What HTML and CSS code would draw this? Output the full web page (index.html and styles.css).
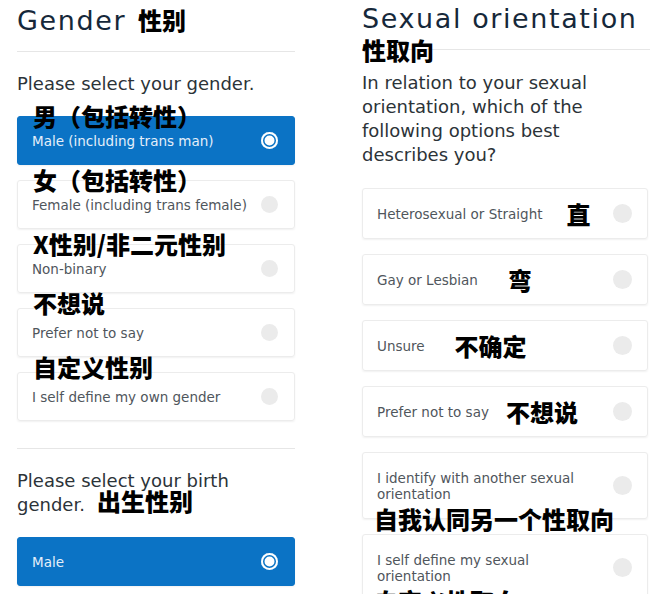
FILE: index.html
```html
<!DOCTYPE html>
<html lang="en">
<head>
  <meta charset="UTF-8">
  <meta name="viewport" content="width=device-width, initial-scale=1.0">
  <title>Gender and sexual orientation</title>
  <link rel="stylesheet" href="styles.css">
</head>
<body>
  <div class="page">

    <!-- left: gender -->
    <section class="panel panel-gender">
      <div class="panel-head">
        <h1>Gender<span class="note-inline">性别</span></h1>
      </div>
      <p class="question">Please select your gender.</p>
      <div class="options">
        <label class="option selected">
          <span class="note">男（包括转性）</span>
          <span class="option-text">Male (including trans man)</span>
          <span class="radio"></span>
        </label>
        <label class="option">
          <span class="note">女（包括转性）</span>
          <span class="option-text">Female (including trans female)</span>
          <span class="radio"></span>
        </label>
        <label class="option">
          <span class="note">X性别/非二元性别</span>
          <span class="option-text">Non-binary</span>
          <span class="radio"></span>
        </label>
        <label class="option">
          <span class="note raised">不想说</span>
          <span class="option-text">Prefer not to say</span>
          <span class="radio"></span>
        </label>
        <label class="option">
          <span class="note raised">自定义性别</span>
          <span class="option-text">I self define my own gender</span>
          <span class="radio"></span>
        </label>
      </div>

      <div class="divider"></div>

      <p class="question">Please select your birth<br>gender.<span class="note-inline">出生性别</span></p>
      <div class="options">
        <label class="option selected">
          <span class="option-text">Male</span>
          <span class="radio"></span>
        </label>
      </div>
    </section>

    <!-- right: sexual orientation -->
    <section class="panel panel-orientation">
      <div class="panel-head">
        <h1>Sexual orientation</h1>
        <span class="note note-head">性取向</span>
      </div>
      <p class="question">In relation to your sexual orientation, which of the following options best describes you?</p>
      <div class="options">
        <label class="option">
          <span class="option-text">Heterosexual or Straight<span class="note-inline">直</span></span>
          <span class="radio"></span>
        </label>
        <label class="option">
          <span class="option-text">Gay or Lesbian<span class="note-inline wide">弯</span></span>
          <span class="radio"></span>
        </label>
        <label class="option">
          <span class="option-text">Unsure<span class="note-inline wide">不确定</span></span>
          <span class="radio"></span>
        </label>
        <label class="option">
          <span class="option-text">Prefer not to say<span class="note-inline tight">不想说</span></span>
          <span class="radio"></span>
        </label>
        <label class="option">
          <span class="option-text">I identify with another sexual orientation</span>
          <span class="radio"></span>
          <span class="note note-bottom">自我认同另一个性取向</span>
        </label>
        <label class="option">
          <span class="option-text">I self define my sexual orientation</span>
          <span class="radio"></span>
          <span class="note note-bottom">自定义性取向</span>
        </label>
      </div>
    </section>

  </div>
</body>
</html>
```

FILE: styles.css
```css
html, body {
  overflow: hidden;
}

body {
  margin: 0;
  background-color: #ffffff;
  font-family: "DejaVu Sans", "Noto Sans", sans-serif;
  color: #2f353b;
}

.page {
  display: grid;
  grid-template-columns: 278px 288px;
  column-gap: 67px;
  padding-left: 17px;
}

.panel-gender {
  padding-top: 5px;
}

.panel-orientation {
  padding-top: 3px;
}

.panel-head {
  position: relative;
  padding-bottom: 14px;
  border-bottom: 1px solid #e6e6e6;
  margin-bottom: 20px;
}

.panel-orientation .panel-head {
  padding-bottom: 14px;
  margin-bottom: 21px;
}

h1 {
  margin: 0;
  font-size: 27px;
  line-height: 32px;
  font-weight: normal;
  letter-spacing: 1.6px;
  color: #16283a;
  white-space: nowrap;
}

/* the black chinese captions written over the screenshot */
.note,
.note-inline {
  font-family: "Noto Sans CJK SC", sans-serif;
  font-weight: 900;
  font-size: 24px;
  line-height: 24px;
  letter-spacing: 0;
  color: #000000;
  white-space: nowrap;
}

.note-inline {
  margin-left: 12px;
}

h1 .note-inline,
.question .note-inline {
  line-height: 16px;
}

.note {
  position: absolute;
  left: 15px;
  top: -13px;
  z-index: 1;
}

.note.raised {
  top: -18px;
}

.note-head {
  left: 0;
  top: auto;
  bottom: -13px;
}

.note-bottom {
  left: 11px;
  top: auto;
  bottom: -13px;
}

.question {
  margin: 0 0 20px;
  font-size: 18px;
  line-height: 24px;
  color: #2c3338;
}

.panel-orientation .question {
  margin-bottom: 21px;
}

.options {
  display: flex;
  flex-direction: column;
  gap: 15px;
}

.option {
  position: relative;
  display: flex;
  align-items: center;
  justify-content: space-between;
  gap: 12px;
  padding: 15.5px 16px 15.5px 14px;
  border: 1px solid #ececec;
  border-radius: 3px;
  box-shadow: 0 1px 2px rgba(0, 0, 0, 0.06);
  font-size: 13.5px;
  line-height: 16px;
  color: #50565c;
}

.panel-orientation .option {
  padding: 16.5px 15px 16.5px 14px;
  margin-right: 2px;
}

.option-text {
  display: flex;
  align-items: center;
}

.panel-orientation .option-text {
  max-width: 215px;
}

.option .note-inline {
  line-height: 16px;
  margin-left: 24px;
}

.option .note-inline.wide {
  margin-left: 30px;
}

.option .note-inline.tight {
  margin-left: 17px;
}

.radio {
  flex: none;
  width: 17px;
  height: 17px;
  margin: -2px 0;
  border-radius: 50%;
  background-color: #ebebeb;
}

.panel-orientation .radio {
  width: 19px;
  height: 19px;
}

.option.selected {
  background-color: #0b73c5;
  border-color: #0b73c5;
  color: #e4effa;
}

.option.selected .radio {
  background-color: #ffffff;
  box-shadow: inset 0 0 0 2px #ffffff, inset 0 0 0 3.5px #0b73c5;
}

.divider {
  border-top: 1px solid #e6e6e6;
  margin: 27px 0 20px;
}
```
